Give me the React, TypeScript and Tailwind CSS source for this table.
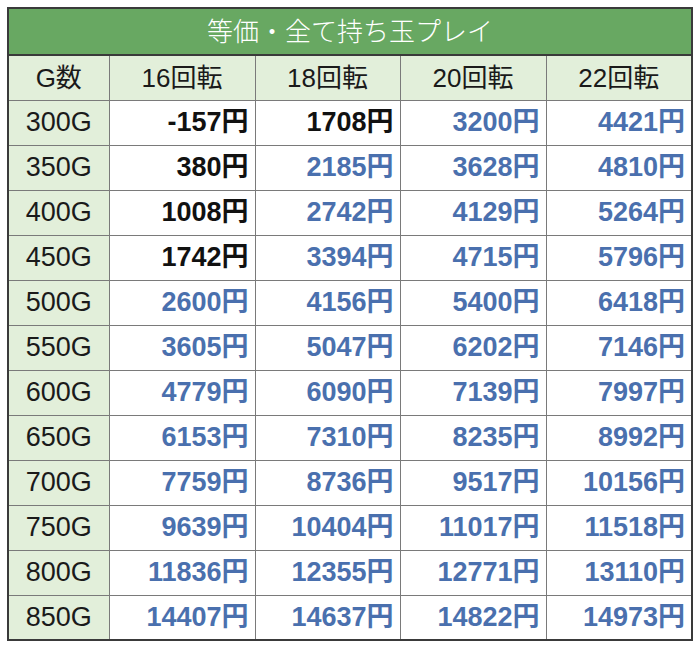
const rows: { g: string; v: [number, boolean][] }[] = [
  { g: "300G", v: [[-157, true], [1708, true], [3200, false], [4421, false]] },
  { g: "350G", v: [[380, true], [2185, false], [3628, false], [4810, false]] },
  { g: "400G", v: [[1008, true], [2742, false], [4129, false], [5264, false]] },
  { g: "450G", v: [[1742, true], [3394, false], [4715, false], [5796, false]] },
  { g: "500G", v: [[2600, false], [4156, false], [5400, false], [6418, false]] },
  { g: "550G", v: [[3605, false], [5047, false], [6202, false], [7146, false]] },
  { g: "600G", v: [[4779, false], [6090, false], [7139, false], [7997, false]] },
  { g: "650G", v: [[6153, false], [7310, false], [8235, false], [8992, false]] },
  { g: "700G", v: [[7759, false], [8736, false], [9517, false], [10156, false]] },
  { g: "750G", v: [[9639, false], [10404, false], [11017, false], [11518, false]] },
  { g: "800G", v: [[11836, false], [12355, false], [12771, false], [13110, false]] },
  { g: "850G", v: [[14407, false], [14637, false], [14822, false], [14973, false]] },
];

const heads = ["G数", "16回転", "18回転", "20回転", "22回転"];

export default function App() {
  return (
    <div
      className="w-[700px] h-[648px] bg-white pt-[7px] pl-[7px]"
      style={{ fontFamily: '"Liberation Sans", "Noto Sans CJK JP", sans-serif' }}
    >
      <table className="border-collapse border-2 border-[#3a3a3a] w-[684px] table-fixed">
        <colgroup>
          <col className="w-[101px]" />
          <col className="w-[146px]" />
          <col className="w-[145px]" />
          <col className="w-[146px]" />
          <col className="w-[146px]" />
        </colgroup>
        <thead>
          <tr className="h-[47px]">
            <th
              colSpan={5}
              className="bg-[#68a862] text-white font-light text-[26px] text-center border-b-2 border-[#3a3a3a] leading-none"
            >
              等価・全て持ち玉プレイ
            </th>
          </tr>
          <tr className="h-[45px]">
            {heads.map((h) => (
              <th
                key={h}
                className="bg-[#e2efda] text-[#1a1a1a] font-normal text-[26px] text-center border border-[#7a7a7a] leading-none"
              >
                {h}
              </th>
            ))}
          </tr>
        </thead>
        <tbody>
          {rows.map((r) => (
            <tr key={r.g} className="h-[45px]">
              <td className="bg-[#e2efda] text-[#1a1a1a] text-[27px] text-center border border-[#7a7a7a] leading-none">
                {r.g}
              </td>
              {r.v.map(([n, black], i) => (
                <td
                  key={i}
                  className={
                    "text-right font-bold text-[27px] pr-[6px] border border-[#7a7a7a] leading-none " +
                    (black ? "text-[#111111]" : "text-[#4a70ae]")
                  }
                >
                  {n}円
                </td>
              ))}
            </tr>
          ))}
        </tbody>
      </table>
    </div>
  );
}
